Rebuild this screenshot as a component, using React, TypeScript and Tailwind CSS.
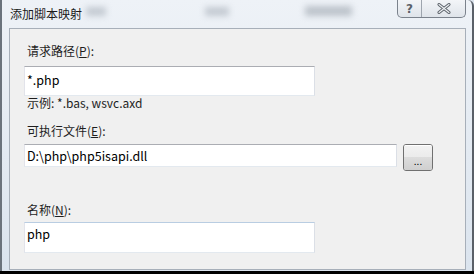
import React from "react";

const font = { fontFamily: '"Noto Sans CJK SC", "Microsoft YaHei", sans-serif' };

const Label = ({ text, keyChar }: { text: string; keyChar: string }) => (
  <div className="ml-[3px] text-[12px] leading-[16px] text-[#1e1e1e]">
    {text}(<span className="underline">{keyChar}</span>):
  </div>
);

const Field = ({ value, className }: { value: string; className: string }) => (
  <div
    className={`bg-white border border-[#abadb3] border-l-[#e2e3ea] border-r-[#dbdfe6] border-b-[#e3e9ef] px-[2px] text-[12.5px] leading-[18px] text-black ${className}`}
  >
    {value}
  </div>
);

const App = () => {
  return (
    <div className="w-[474px] h-[274px] flex flex-col bg-[#dce4ee] overflow-hidden" style={font}>
      <div className="flex-1 flex flex-col border-l-2 border-l-[#6b737c] border-r-2 border-r-[#5a6068] rounded-tr-[6px] bg-gradient-to-b from-[#eef2f7] to-[#dbe4ee]">
        {/* title bar */}
        <div className="h-[27px] flex items-start">
          <div className="ml-[8px] mt-[6px] text-[12px] leading-[16px] text-[#1b1b1b]">添加脚本映射</div>
          <div className="ml-[4px] mt-[7px] w-[20px] h-[9px] bg-[#9aa3ad] blur-[3px] opacity-50" />
          <div className="ml-[99px] mt-[7px] w-[24px] h-[9px] bg-[#9aa3ad] blur-[3px] opacity-50" />
          <div className="ml-[76px] mt-[6px] w-[47px] h-[10px] bg-[#8d96a0] blur-[3px] opacity-50" />
          <div className="ml-auto mr-[6px] flex h-[18px] border border-t-0 border-[#7b828c] rounded-b-[5px] bg-gradient-to-b from-[#f3f5f8] to-[#dfe4ea] overflow-hidden">
            <div className="w-[24px] flex items-center justify-center border-r border-[#9ea5ae] text-[12px] font-bold text-[#5b6169]" style={{ fontFamily: '"DejaVu Sans", sans-serif' }}>
              ?
            </div>
            <div className="w-[43px] flex items-center justify-center">
              <svg width="14" height="11" viewBox="0 0 14 11">
                <path d="M2 1.5 L12 9.5 M12 1.5 L2 9.5" stroke="#5b6169" strokeWidth="3" strokeLinecap="round" />
                <path d="M2 1.5 L12 9.5 M12 1.5 L2 9.5" stroke="#eef1f4" strokeWidth="1.2" strokeLinecap="round" />
              </svg>
            </div>
          </div>
        </div>
        {/* client */}
        <div className="ml-[7px] mr-[6px] mt-[1px] h-[242px] bg-[#f0f0f0] border border-[#a7afb9] pl-[14px]">
          <div className="mt-[14px]">
            <Label text="请求路径" keyChar="P" />
          </div>
          <Field value="*.php" className="mt-[7px] w-[291px] h-[30px] pt-[4px]" />
          <div className="ml-[3px] text-[12px] leading-[14px] text-[#1e1e1e]">示例: *.bas, wsvc.axd</div>
          <div className="mt-[13px]">
            <Label text="可执行文件" keyChar="E" />
          </div>
          <div className="mt-[5px] flex items-start gap-[6px]">
            <Field value={"D:\\php\\php5isapi.dll"} className="w-[373px] h-[23px] pt-[2px]" />
            <div className="w-[30px] h-[27px] rounded-[3px] border border-[#707070] flex flex-col overflow-hidden">
              <div className="h-[12px] bg-gradient-to-b from-[#f2f2f2] to-[#ebebeb] border-t border-white" />
              <div className="flex-1 bg-gradient-to-b from-[#dddddd] to-[#cfcfcf] flex items-start justify-center text-[10px] leading-[8px] text-black">
                ...
              </div>
            </div>
          </div>
          <div className="mt-[31px]">
            <Label text="名称" keyChar="N" />
          </div>
          <Field value="php" className="mt-[4px] w-[291px] h-[31px] pt-[2px] border-[#b9cde2] border-l-[#c9d9ea] border-r-[#c9d9ea] border-b-[#d5e2ef]" />
        </div>
        <div className="flex-1" />
      </div>
      <div className="h-[3px] bg-black" />
    </div>
  );
};

export default App;
